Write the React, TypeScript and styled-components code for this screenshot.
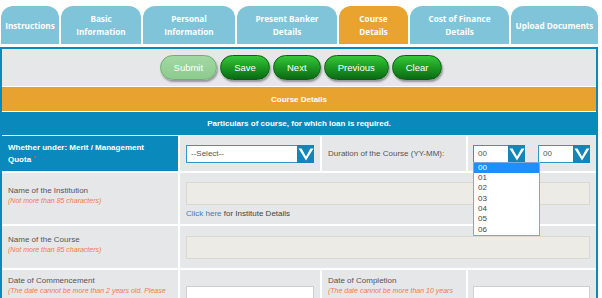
import React from 'react';
import styled, { createGlobalStyle } from 'styled-components';

const GlobalStyle = createGlobalStyle`
	html, body {
		margin: 0;
		padding: 0;
		background: #fff;
	}
	body {
		font-family: "Liberation Sans", Arial, sans-serif;
		overflow: hidden;
	}
`;

const Page = styled.div`
	width: 598px;
	height: 298px;
	overflow: hidden;
`;

const TabRow = styled.nav`
	display: flex;
	gap: 2px;
	padding: 6px 0 0 1px;
`;

const Tab = styled.div<{ $w: number; $active?: boolean }>`
	flex: none;
	width: ${p => p.$w}px;
	height: 38px;
	display: flex;
	align-items: center;
	justify-content: center;
	text-align: center;
	border-radius: 12px 12px 0 0;
	background: ${p => (p.$active ? '#e9a32f' : '#80c4da')};
	color: #fff;
	font-family: "Open Sans", sans-serif;
	font-weight: 700;
	font-size: 8.2px;
	line-height: 13px;
`;

const Frame = styled.section`
	margin-top: 3px;
	border: 2px solid #0a89bd;
	border-bottom: none;
	background: #fff;
`;

const ButtonBar = styled.div`
	height: 37px;
	margin-bottom: 1px;
	padding-left: 4px;
	background: #e6e7e8;
	display: flex;
	align-items: center;
	justify-content: center;
	gap: 3px;
`;

const ActionButton = styled.button<{ $disabled?: boolean }>`
	height: 25px;
	padding: 0 13px;
	min-width: 48px;
	border-radius: 13px;
	border: 1px solid ${p => (p.$disabled ? '#6fae74' : '#0b5e12')};
	background: ${p =>
		p.$disabled
			? 'linear-gradient(#a3d8a3, #8ccb8e)'
			: 'linear-gradient(#36c83a 0%, #1e9e24 45%, #0c6a14 100%)'};
	box-shadow: 1px 2px 2px rgba(0, 0, 0, 0.35);
	color: #fff;
	font-family: "Liberation Sans", Arial, sans-serif;
	font-size: 9.5px;
	cursor: pointer;
`;

const Banner = styled.div<{ $tone: 'orange' | 'blue' }>`
	height: ${p => (p.$tone === 'orange' ? 24 : 23)}px;
	margin-bottom: 1px;
	background: ${p => (p.$tone === 'orange' ? '#e8a22f' : '#0a89bd')};
	color: #fff;
	font-weight: 700;
	font-size: 8px;
	display: flex;
	align-items: center;
	justify-content: center;
`;

const Grid = styled.div`
	display: grid;
	grid-template-columns: 176px 140px 144px 128px;
	grid-template-rows: 35px 51px 42px 60px;
	gap: 2px;
`;

const Cell = styled.div<{ $head?: boolean; $span?: number; $top?: number; $left?: number }>`
	grid-column: span ${p => p.$span ?? 1};
	background: ${p => (p.$head ? '#0a89bd' : '#e6e7e8')};
	color: ${p => (p.$head ? '#fff' : '#555')};
	font-weight: ${p => (p.$head ? 700 : 400)};
	font-size: 8px;
	line-height: 11px;
	padding: ${p => (p.$top !== undefined ? `${p.$top}px` : '0')} 6px 0 ${p => p.$left ?? 6}px;
	display: flex;
	flex-direction: column;
	justify-content: ${p => (p.$top !== undefined ? 'flex-start' : 'center')};
	position: relative;
`;

const HeadLabel = styled.span`
	padding-right: 24px;
	line-height: 12px;
`;

const Required = styled.span`
	position: relative;
	top: -2px;
	margin-left: 2px;
	color: #ff3b3b;
	font-size: 6px;
	line-height: 6px;
`;

const Hint = styled.span`
	color: #f47a45;
	font-style: italic;
	font-size: 7px;
	line-height: 10px;
`;

const SelectRow = styled.div`
	display: flex;
	gap: 13px;
`;

const SelectWrap = styled.div<{ $w: number }>`
	position: relative;
	width: ${p => p.$w}px;
	height: 18px;
	box-sizing: border-box;
	border: 1px solid #3196cc;
	background: #fff;
	display: flex;
	align-items: stretch;
	color: #555;
	font-size: 8px;
`;

const SelectText = styled.span`
	flex: 1;
	padding-left: 4px;
	display: flex;
	align-items: center;
`;

const ArrowBox = styled.span`
	width: 17px;
	margin: -1px -1px -1px 0;
	background: #1585b8;
	display: flex;
	align-items: center;
	justify-content: center;
`;

const OptionList = styled.ul`
	position: absolute;
	top: 16px;
	left: -1px;
	width: 67px;
	margin: 0;
	padding: 0;
	list-style: none;
	box-sizing: border-box;
	border: 1px solid #7fa8d8;
	background: #fff;
	z-index: 5;
`;

const Option = styled.li<{ $active?: boolean }>`
	height: 10.4px;
	line-height: 10.4px;
	padding-left: 4px;
	font-size: 8px;
	color: ${p => (p.$active ? '#fff' : '#444')};
	background: ${p => (p.$active ? '#1e8fff' : 'transparent')};
`;

const TextInput = styled.input<{ $white?: boolean }>`
	display: block;
	width: 100%;
	height: 23px;
	box-sizing: border-box;
	margin: 0;
	border: 1px solid ${p => (p.$white ? '#cfcfcf' : '#d9d9d1')};
	background: ${p => (p.$white ? '#fff' : '#ecebe5')};
	outline: none;
`;

const HelpLine = styled.p`
	margin: 4px 0 0;
	font-size: 8px;
	line-height: 10px;
	color: #444;
`;

const LinkText = styled.a`
	color: #3b7dc4;
	text-decoration: none;
`;

const Chevron: React.FC = () => (
	<svg width="16" height="14" viewBox="0 0 16 14">
		<path d="M0.5 1.5 L3.6 1.5 L8 9.4 L12.4 1.5 L15.5 1.5 L8 13.5 Z" fill="#fff" />
	</svg>
);

type SelectProps = {
	width: number;
	value: string;
	options?: string[];
};

const Select: React.FC<SelectProps> = ({ width, value, options }) => (
	<SelectWrap $w={width}>
		<SelectText>{value}</SelectText>
		<ArrowBox>
			<Chevron />
		</ArrowBox>
		{options && (
			<OptionList>
				{options.map((o, i) => (
					<Option key={o} $active={i === 0}>{o}</Option>
				))}
			</OptionList>
		)}
	</SelectWrap>
);

const tabs = [
	{ label: ['Instructions'], w: 58 },
	{ label: ['Basic', 'Information'], w: 80 },
	{ label: ['Personal', 'Information'], w: 92 },
	{ label: ['Present Banker', 'Details'], w: 100 },
	{ label: ['Course', 'Details'], w: 69, active: true },
	{ label: ['Cost of Finance', 'Details'], w: 99 },
	{ label: ['Upload Documents'], w: 87 },
];

const buttons = ['Submit', 'Save', 'Next', 'Previous', 'Clear'];

const months = ['00', '01', '02', '03', '04', '05', '06'];

const App: React.FC = () => {
	return (
		<Page>
			<GlobalStyle />
			<TabRow>
				{tabs.map(t => (
					<Tab key={t.label.join(' ')} $w={t.w} $active={t.active}>
						<span>
							{t.label.map((l, i) => (
								<React.Fragment key={l}>
									{i > 0 && <br />}
									{l}
								</React.Fragment>
							))}
						</span>
					</Tab>
				))}
			</TabRow>
			<Frame>
				<ButtonBar>
					{buttons.map(b => (
						<ActionButton key={b} $disabled={b === 'Submit'}>{b}</ActionButton>
					))}
				</ButtonBar>
				<Banner $tone="orange">Course Details</Banner>
				<Banner $tone="blue">Particulars of course, for which loan is required.</Banner>
				<Grid>
					<Cell $head>
						<HeadLabel>
							Whether under: Merit / Management Quota<Required>*</Required>
						</HeadLabel>
					</Cell>
					<Cell>
						<Select width={128} value="--Select--" />
					</Cell>
					<Cell>Duration of the Course (YY-MM):</Cell>
					<Cell $left={5}>
						<SelectRow>
							<Select width={52} value="00" options={months} />
							<Select width={52} value="00" />
						</SelectRow>
					</Cell>

					<Cell $top={12}>
						<span>Name of the Institution</span>
						<Hint>(Not more than 85 characters)</Hint>
					</Cell>
					<Cell $span={3} $top={9}>
						<TextInput readOnly />
						<HelpLine>
							<LinkText href="#">Click here</LinkText> for Institute Details
						</HelpLine>
					</Cell>

					<Cell $top={8}>
						<span>Name of the Course</span>
						<Hint>(Not more than 85 characters)</Hint>
					</Cell>
					<Cell $span={3}>
						<TextInput readOnly />
					</Cell>

					<Cell $top={5}>
						<span>Date of Commencement</span>
						<Hint>(The date cannot be more than 2 years old. Please select the correct date)</Hint>
					</Cell>
					<Cell $top={16}>
						<TextInput $white readOnly />
					</Cell>
					<Cell $top={5}>
						<span>Date of Completion</span>
						<Hint>(The date cannot be more than 10 years from Date of Commencement)</Hint>
					</Cell>
					<Cell $top={16} $left={5}>
						<TextInput $white readOnly />
					</Cell>
				</Grid>
			</Frame>
		</Page>
	);
};

export default App;
